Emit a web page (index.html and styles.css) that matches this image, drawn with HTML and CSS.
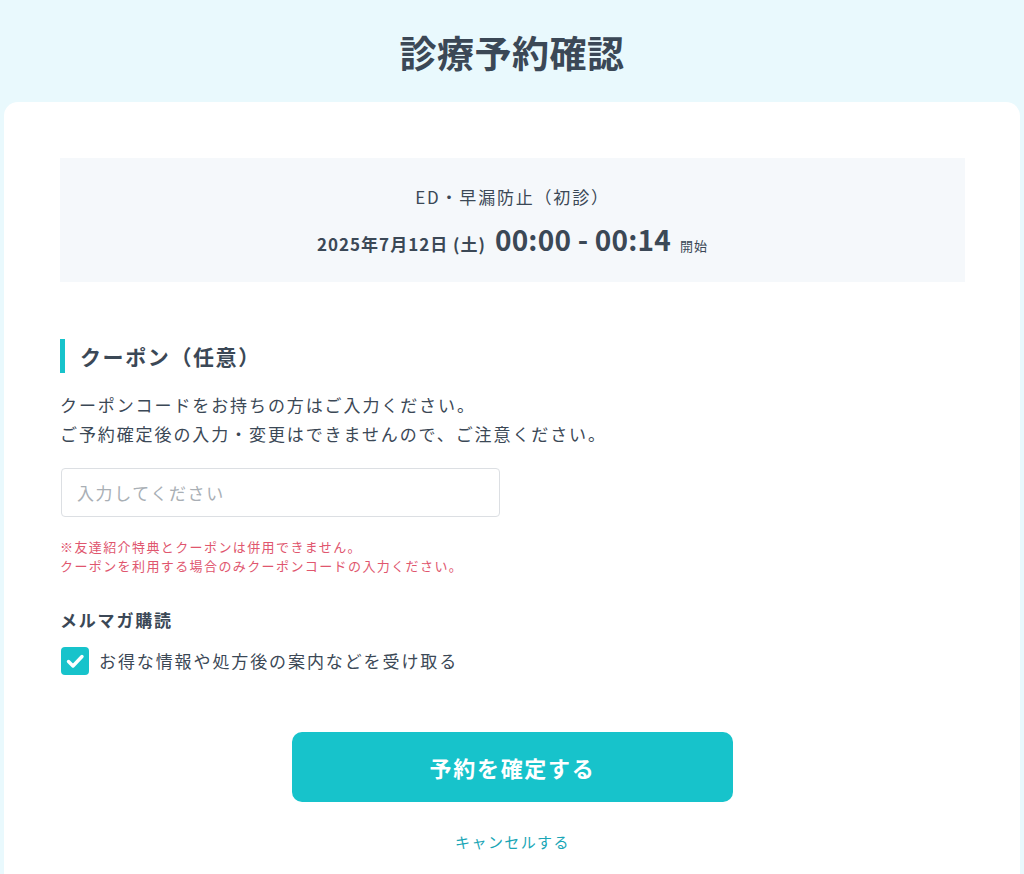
FILE: index.html
```html
<!DOCTYPE html>
<html lang="ja">
<head>
<meta charset="utf-8">
<title>診療予約確認</title>
<link rel="stylesheet" href="styles.css">
</head>
<body>
<header class="page-head">
  <h1 class="page-title">診療予約確認</h1>
</header>
<main class="card">
  <section class="summary">
    <p class="summary-menu">ED・早漏防止（初診）</p>
    <p class="summary-time">
      <span class="date">2025年7月12日 (土)</span>
      <span class="time">00:00 - 00:14</span>
      <span class="start">開始</span>
    </p>
  </section>

  <section class="coupon">
    <h2 class="section-title">クーポン（任意）</h2>
    <p class="lead">クーポンコードをお持ちの方はご入力ください。<br>ご予約確定後の入力・変更はできませんので、ご注意ください。</p>
    <input class="text-input" type="text" placeholder="入力してください">
    <p class="note">※友達紹介特典とクーポンは併用できません。<br>クーポンを利用する場合のみクーポンコードの入力ください。</p>
  </section>

  <section class="mail">
    <h3 class="mail-title">メルマガ購読</h3>
    <label class="check">
      <span class="check-box">
        <svg viewBox="0 0 28 28" width="28" height="28" aria-hidden="true">
          <path d="M7.5 14.5 L12 19 L21 9.5" fill="none" stroke="#fff" stroke-width="3.4" stroke-linecap="round" stroke-linejoin="round"/>
        </svg>
      </span>
      <span class="check-label">お得な情報や処方後の案内などを受け取る</span>
    </label>
  </section>

  <div class="actions">
    <button class="primary-btn" type="button">予約を確定する</button>
    <a class="cancel-link" href="#">キャンセルする</a>
  </div>
</main>
</body>
</html>
```

FILE: styles.css
```css
* { box-sizing: border-box; }
html, body { margin: 0; padding: 0; }
body {
  background: #e9f9fd;
  font-family: "Noto Sans CJK JP", "Noto Sans", sans-serif;
  color: #3b4856;
  min-height: 874px;
}
.page-head {
  height: 102px;
  display: flex;
  justify-content: center;
  padding-top: 25px;
}
.page-title {
  margin: 0;
  font-size: 37px;
  line-height: 54px;
  font-weight: 700;
  color: #3b4856;
  letter-spacing: 0.5px;
}
.card {
  margin: 0 4px;
  background: #fff;
  border-radius: 14px 14px 0 0;
  padding: 56px 55px 40px 56px;
  min-height: 772px;
}
.summary {
  background: #f5f8fb;
  height: 124px;
  display: flex;
  flex-direction: column;
  align-items: center;
  padding-top: 24px;
}
.summary p { margin: 0; }
.summary-menu {
  font-size: 17px;
  line-height: 30px;
  letter-spacing: 1.8px;
  color: #3b4856;
}
.summary-time {
  display: flex;
  align-items: baseline;
  gap: 9px;
  margin-top: 7px !important;
  line-height: 40px;
}
.date { font-size: 17px; font-weight: 700; letter-spacing: 1px; }
.time { font-size: 28px; font-weight: 700; letter-spacing: 0.2px; }
.start { font-size: 13px; letter-spacing: 1px; }

.coupon { margin-top: 57px; }
.section-title {
  margin: 0;
  border-left: 5px solid #17c3cb;
  padding-left: 15px;
  font-size: 21px;
  line-height: 34px;
  font-weight: 700;
  letter-spacing: 1.6px;
  color: #3b4856;
}
.lead {
  margin: 17px 0 0;
  font-size: 17px;
  line-height: 29px;
  letter-spacing: 1.9px;
  color: #3b4856;
}
.text-input {
  display: block;
  margin-top: 20px;
  margin-left: 1px;
  width: 439px;
  height: 49px;
  border: 1px solid #dcdfe3;
  border-radius: 4px;
  padding: 0 15px;
  font-family: inherit;
  font-size: 17px;
  letter-spacing: 1.6px;
  color: #3b4856;
  background: #fff;
  outline: none;
}
.text-input::placeholder { color: #a9afb5; }
.note {
  margin: 20px 0 0;
  font-size: 13px;
  line-height: 19px;
  letter-spacing: 1.4px;
  color: #e0566e;
}
.mail { margin-top: 33px; }
.mail-title {
  margin: 0;
  font-size: 17px;
  line-height: 24px;
  font-weight: 700;
  letter-spacing: 1.8px;
  color: #3b4856;
}
.check {
  display: flex;
  align-items: center;
  gap: 10px;
  margin-top: 15px;
  margin-left: 1px;
}
.check-box {
  width: 28px;
  height: 28px;
  border-radius: 4px;
  background: #17c3cb;
  display: flex;
}
.check-label {
  font-size: 17px;
  line-height: 28px;
  letter-spacing: 1.9px;
  color: #3b4856;
}
.actions {
  display: flex;
  flex-direction: column;
  align-items: center;
  margin-top: 57px;
}
.primary-btn {
  width: 441px;
  height: 70px;
  border: none;
  border-radius: 10px;
  background: #17c3cb;
  color: #fff;
  font-family: inherit;
  font-size: 22px;
  font-weight: 700;
  letter-spacing: 1.7px;
  cursor: pointer;
}
.cancel-link {
  margin-top: 28px;
  font-size: 15px;
  line-height: 24px;
  letter-spacing: 1.4px;
  color: #1aa6b6;
  text-decoration: none;
}
```
